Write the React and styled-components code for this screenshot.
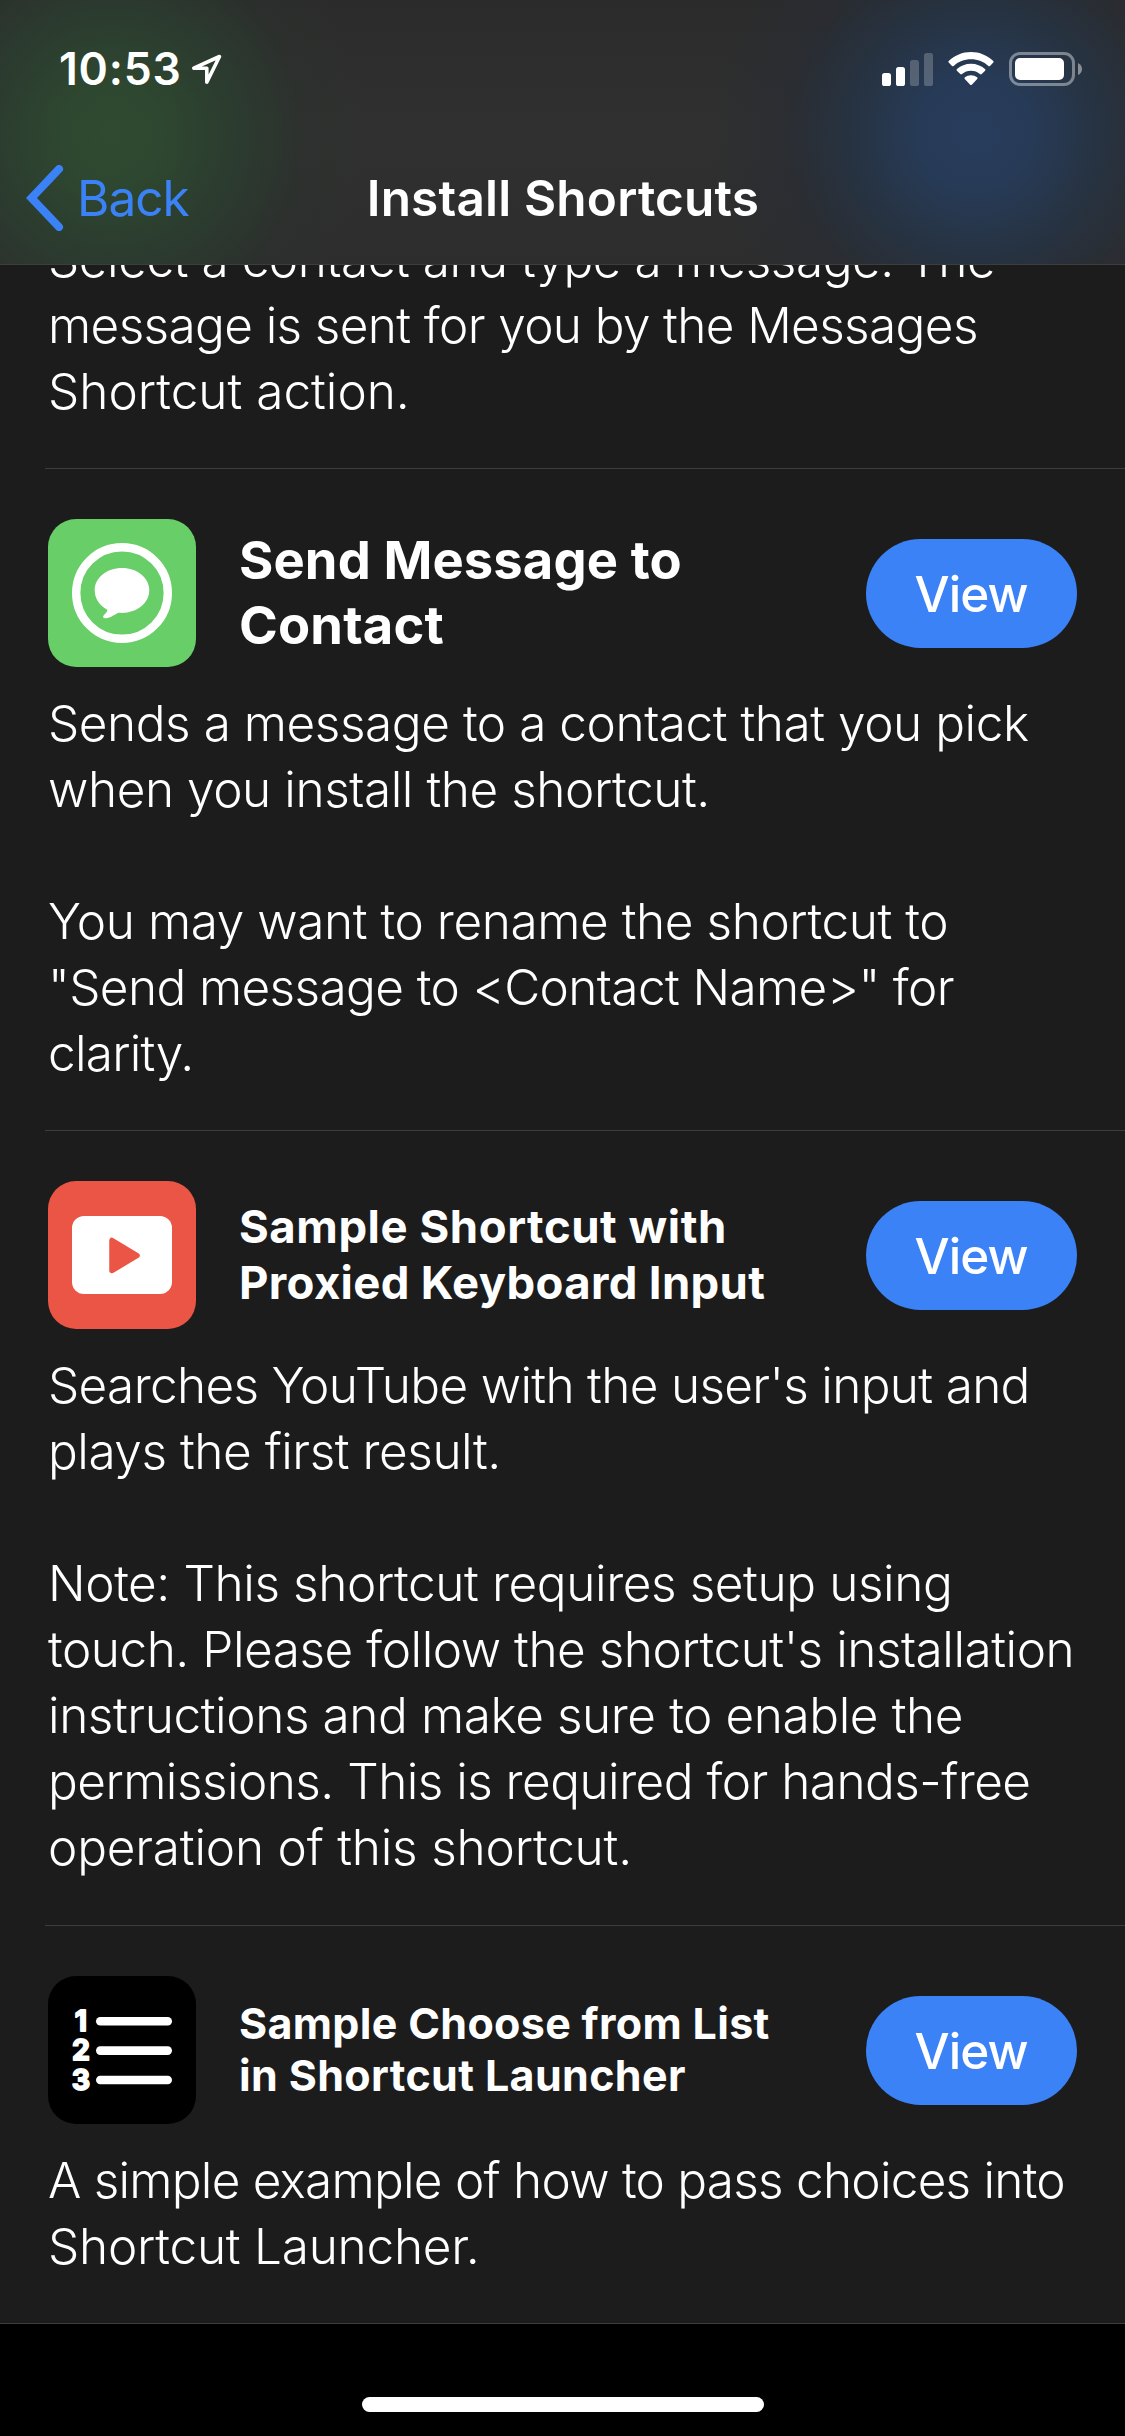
import React from "react";
import styled, { createGlobalStyle } from "styled-components";

const GlobalStyle = createGlobalStyle`
  * { box-sizing: border-box; }
  body {
    margin: 0;
    background: #000;
    color: #fff;
    font-family: Inter, "Liberation Sans", sans-serif;
    font-kerning: normal;
  }
`;

const Screen = styled.div`
  display: flex;
  flex-direction: column;
  width: 1125px;
  height: 2436px;
  overflow: hidden;
  background: #000;
`;

const Header = styled.header`
  flex: none;
  display: flex;
  flex-direction: column;
  height: 265px;
  border-bottom: 1px solid #3d3d3f;
  background:
    radial-gradient(circle 255px at 112px 135px, #2f4a30 0%, #2e4730 20%, rgba(43, 61, 47, 0.9) 48%, rgba(43, 50, 45, 0.5) 75%, rgba(46, 46, 46, 0) 100%),
    radial-gradient(circle 265px at 975px 133px, #283d5c 0%, #273b58 20%, rgba(38, 51, 67, 0.95) 46%, rgba(40, 44, 52, 0.65) 70%, rgba(44, 44, 44, 0) 100%),
    linear-gradient(#2b2b2b 0%, #303030 50%, #2d2d2d 100%);
`;

const StatusBar = styled.div`
  display: flex;
  justify-content: space-between;
  height: 132px;
  padding: 42px 43px 0 59px;
`;

const StatusGroup = styled.div`
  display: flex;
  align-items: center;
  height: 54px;
  gap: ${(p) => p.$gap}px;
`;

const Time = styled.span`
  font-size: 44.5px;
  font-weight: 600;
  line-height: 54px;
  letter-spacing: 0.8px;
`;

const NavBar = styled.nav`
  display: grid;
  grid-template-columns: 1fr auto 1fr;
  align-items: center;
  height: 132px;
  padding: 0 26px;
`;

const BackButton = styled.a`
  display: flex;
  align-items: center;
  gap: 13px;
  color: #3b82f7;
  font-size: 49.5px;
  line-height: 60px;
  letter-spacing: -1px;
`;

const NavTitle = styled.h1`
  margin: 0;
  padding-left: 1px;
  font-size: 49.5px;
  font-weight: 600;
  line-height: 60px;
  letter-spacing: 0.19px;
`;

const List = styled.main`
  flex: none;
  overflow: hidden;
  background: #1c1c1c;
  border-bottom: 1px solid #3d3d3f;
`;

const ScrolledCell = styled.section`
  margin-top: -39px;
  padding: 0 0 44px 48px;
`;

const Cell = styled.section`
  padding: 50px 48px ${(p) => p.$bottom || 44}px 48px;
`;

const Separator = styled.div`
  height: 1px;
  margin-left: 45px;
  background: #3d3d3f;
`;

const CellHeader = styled.div`
  display: flex;
  align-items: center;
  height: 148px;
`;

const AppIcon = styled.div`
  flex: none;
  width: 148px;
  height: 148px;
  border-radius: 28px;
  overflow: hidden;
  background: ${(p) => p.$color};

  svg { display: block; }
`;

const CellTitle = styled.h2`
  flex: 1;
  margin: 0 0 0 43px;
  padding-bottom: ${(p) => p.$lift || 0}px;
  font-size: ${(p) => p.$size}px;
  line-height: ${(p) => p.$leading}px;
  font-weight: 700;
`;

const ViewButton = styled.button`
  flex: none;
  width: 211px;
  height: 109px;
  padding: 1px 1px 0 0;
  border: 0;
  border-radius: 54.5px;
  background: #3b82f7;
  color: #fff;
  font-family: inherit;
  font-size: 49.5px;
  font-weight: 500;
  line-height: 60px;
  letter-spacing: -1px;
`;

const Description = styled.div`
  margin-top: ${(p) => p.$top || 0}px;
  font-size: 49.5px;
  font-weight: 300;
`;

const Paragraph = styled.p`
  margin: 0;
  line-height: 66px;

  & + & { margin-top: 66px; }
`;

const Line = styled.span`
  display: block;
  white-space: nowrap;
  letter-spacing: ${(p) => p.$track}px;
`;

const HomeArea = styled.footer`
  flex: 1;
  display: flex;
  justify-content: center;
  align-items: flex-end;
  padding-bottom: 24px;
`;

const HomeIndicator = styled.div`
  width: 402px;
  height: 15px;
  border-radius: 7.5px;
  background: #fff;
`;

const LocationIcon = () => (
  <svg width="31" height="31" viewBox="0 0 31 31" fill="none">
    <path d="M28.5 2.5 L2.8 14.2 H15.8 V28.2 Z" stroke="#fff" strokeWidth="3.6" strokeLinejoin="round" />
  </svg>
);

const SignalIcon = () => (
  <svg width="51" height="33" viewBox="0 0 51 33" fill="#fff">
    <rect x="0" y="20" width="9" height="13" rx="2.6" />
    <rect x="14" y="14" width="9" height="19" rx="2.6" />
    <rect x="28" y="7" width="9" height="26" rx="2.6" opacity="0.22" />
    <rect x="42" y="0" width="9" height="33" rx="2.6" opacity="0.22" />
  </svg>
);

const WifiIcon = () => (
  <svg width="46" height="34" viewBox="0 0 46 34" fill="#fff">
    <path d="M23 0 C31.600 0 39.400 3.400 45.300 8.900 Q46 9.700 45.300 10.500 L42 13.900 Q41.200 14.600 40.400 13.900 C35.800 9.600 29.700 7.200 23 7.200 C16.300 7.200 10.200 9.600 5.600 13.900 Q4.800 14.600 4 13.900 L0.700 10.500 Q0 9.700 0.700 8.900 C6.600 3.400 14.400 0 23 0 Z" />
    <path d="M23 11.700 C28.400 11.700 33.300 13.700 37 17.100 Q37.900 17.900 37.100 18.700 L33.700 22.100 Q32.900 22.900 32 22.100 C29.600 20 26.500 18.800 23 18.800 C19.500 18.800 16.400 20 14 22.100 Q13.100 22.900 12.300 22.100 L8.900 18.700 Q8.100 17.900 9 17.100 C12.700 13.700 17.600 11.700 23 11.700 Z" />
    <path d="M23 23.200 C25.300 23.200 27.400 24 29.100 25.300 Q30 26.100 29.200 26.900 L23.800 32.700 Q23 33.500 22.200 32.700 L16.800 26.900 Q16 26.100 16.900 25.300 C18.600 24 20.700 23.200 23 23.200 Z" />
  </svg>
);

const BatteryIcon = () => (
  <svg width="73" height="34" viewBox="0 0 73 34" fill="none">
    <rect x="1.500" y="1.500" width="63" height="31" rx="9.500" stroke="#fff" strokeOpacity="0.4" strokeWidth="3" />
    <rect x="6" y="6" width="49" height="22" rx="5" fill="#fff" />
    <path d="M69 11 Q73 13 73 17 Q73 21 69 23 Z" fill="#fff" fillOpacity="0.45" />
  </svg>
);

const ChevronIcon = () => (
  <svg width="38" height="66" viewBox="0 0 38 66" fill="none">
    <path d="M33 4 L5.500 33 L33 62" stroke="#3b82f7" strokeWidth="8" strokeLinecap="round" strokeLinejoin="miter" />
  </svg>
);

const MessageGlyph = () => (
  <svg width="148" height="148" viewBox="0 0 148 148">
    <circle cx="74" cy="74" r="45.800" fill="none" stroke="#fff" strokeWidth="8.400" />
    <path
      fill="#fff"
      d="M74 49 C89.200 49 101.300 58.600 101.300 71.300 C101.300 84 89.200 93.900 74 93.900 C72.500 93.900 71.200 93.600 70 93.900 C66 96 61.500 99.200 57 99.200 C54.800 99.200 54.600 97.400 56 96 C58.200 93.800 59.400 92.600 59.300 90.800 C51.500 86.600 46.700 79.600 46.700 71.300 C46.700 58.600 58.800 49 74 49 Z"
    />
  </svg>
);

const VideoGlyph = () => (
  <svg width="148" height="148" viewBox="0 0 148 148">
    <rect x="24" y="35" width="100" height="78" rx="12" fill="#fff" />
    <path d="M64 59.500 V89.500 L89 74.500 Z" fill="#eb5545" stroke="#eb5545" strokeWidth="5.500" strokeLinejoin="round" />
  </svg>
);

const Numeral = styled.text`
  font-family: Inter, sans-serif;
  font-size: 28.5px;
  font-weight: 700;
  fill: #fff;
  stroke: #fff;
  stroke-width: 1.8px;
  stroke-linejoin: round;
`;

const ListGlyph = () => (
  <svg width="148" height="148" viewBox="0 0 148 148">
    {[45.2, 74.6, 104].map((y, i) => (
      <g key={y}>
        <Numeral x="33" y={y + 9.800} textAnchor="middle">{i + 1}</Numeral>
        <path d={`M52.300 ${y} H119.700`} stroke="#fff" strokeWidth="8.600" strokeLinecap="round" />
      </g>
    ))}
  </svg>
);

const scrolled = [
  [
    ["Select a contact and type a message. The", -0.45],
    ["message is sent for you by the Messages", -0.62],
    ["Shortcut action.", 0],
  ],
];

const shortcuts = [
  {
    color: "#68ce67",
    Glyph: MessageGlyph,
    title: [["Send Message to", 0.11], ["Contact", 0.15]],
    size: 52.5,
    leading: 65,
    lift: 1,
    text: [
      [
        ["Sends a message to a contact that you pick", -0.45],
        ["when you install the shortcut.", -0.43],
      ],
      [
        ["You may want to rename the shortcut to", -0.42],
        ['"Send message to <Contact Name>" for', -0.61],
        ["clarity.", -0.73],
      ],
    ],
  },
  {
    color: "#eb5545",
    Glyph: VideoGlyph,
    title: [["Sample Shortcut with", 0.55], ["Proxied Keyboard Input", 0.33]],
    size: 45.5,
    leading: 56.5,
    bottom: 45,
    text: [
      [
        ["Searches YouTube with the user's input and", -0.67],
        ["plays the first result.", -0.46],
      ],
      [
        ["Note: This shortcut requires setup using", -0.4],
        ["touch. Please follow the shortcut's installation", -0.46],
        ["instructions and make sure to enable the", -0.41],
        ["permissions. This is required for hands-free", -0.53],
        ["operation of this shortcut.", -0.2],
      ],
    ],
  },
  {
    color: "#000",
    Glyph: ListGlyph,
    title: [["Sample Choose from List", 0.32], ["in Shortcut Launcher", 0.36]],
    size: 43,
    leading: 52,
    lift: 3,
    text: [
      [
        ["A simple example of how to pass choices into", -0.75],
        ["Shortcut Launcher.", -0.24],
      ],
    ],
  },
];

const Lines = ({ lines }) =>
  lines.map(([text, track]) => (
    <Line key={text} $track={track}>{text}</Line>
  ));

const Paragraphs = ({ items }) =>
  items.map((lines, i) => (
    <Paragraph key={i}><Lines lines={lines} /></Paragraph>
  ));

export default function App() {
  return (
    <>
      <GlobalStyle />
      <Screen>
        <Header>
          <StatusBar>
            <StatusGroup $gap={9}>
              <Time>10:53</Time>
              <LocationIcon />
            </StatusGroup>
            <StatusGroup $gap={15}>
              <SignalIcon />
              <WifiIcon />
              <BatteryIcon />
            </StatusGroup>
          </StatusBar>
          <NavBar>
            <BackButton><ChevronIcon />Back</BackButton>
            <NavTitle>Install Shortcuts</NavTitle>
          </NavBar>
        </Header>
        <List>
          <ScrolledCell>
            <Description><Paragraphs items={scrolled} /></Description>
          </ScrolledCell>
          {shortcuts.map((s) => (
            <React.Fragment key={s.size}>
              <Separator />
              <Cell $bottom={s.bottom}>
                <CellHeader>
                  <AppIcon $color={s.color}><s.Glyph /></AppIcon>
                  <CellTitle $size={s.size} $leading={s.leading} $lift={s.lift}>
                    <Lines lines={s.title} />
                  </CellTitle>
                  <ViewButton>View</ViewButton>
                </CellHeader>
                <Description $top={23}><Paragraphs items={s.text} /></Description>
              </Cell>
            </React.Fragment>
          ))}
        </List>
        <HomeArea>
          <HomeIndicator />
        </HomeArea>
      </Screen>
    </>
  );
}
